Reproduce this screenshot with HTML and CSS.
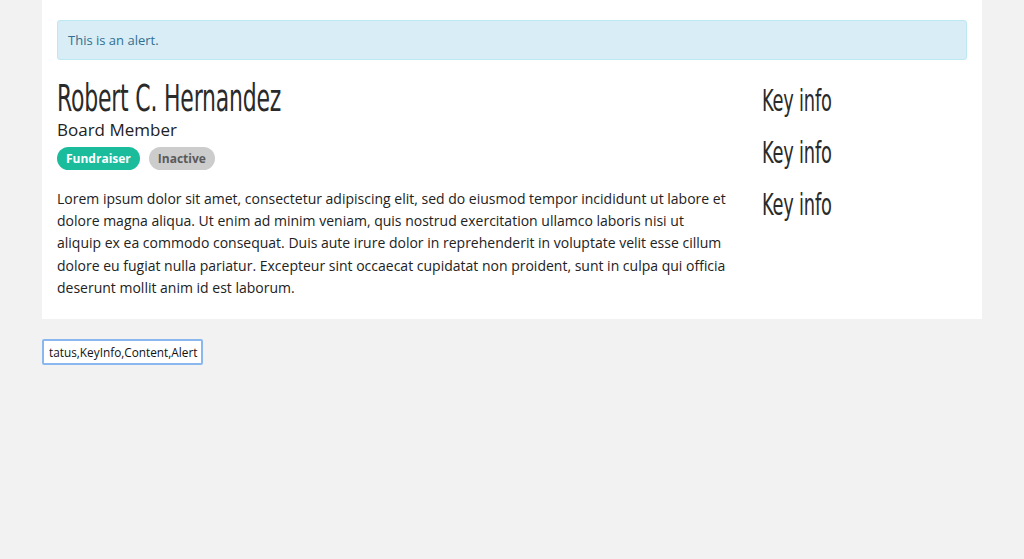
FILE: index.html
```html
<!DOCTYPE html>
<html lang="en">
<head>
<meta charset="utf-8">
<title>Profile</title>
<link rel="stylesheet" href="styles.css">
</head>
<body>
<div class="panel">
  <div class="alert">This is an alert.</div>
  <div class="row">
    <div class="main">
      <h1 class="name"><span class="narrow">Robert C. Hernandez</span></h1>
      <div class="role">Board Member</div>
      <div class="badges">
        <span class="badge badge-green">Fundraiser</span>
        <span class="badge badge-grey">Inactive</span>
      </div>
      <p class="content">Lorem ipsum dolor sit amet, consectetur adipiscing elit, sed do eiusmod tempor incididunt ut labore et dolore magna aliqua. Ut enim ad minim veniam, quis nostrud exercitation ullamco laboris nisi ut aliquip ex ea commodo consequat. Duis aute irure dolor in reprehenderit in voluptate velit esse cillum dolore eu fugiat nulla pariatur. Excepteur sint occaecat cupidatat non proident, sunt in culpa qui officia deserunt mollit anim id est laborum.</p>
    </div>
    <div class="side">
      <div class="key"><span class="narrow">Key info</span></div>
      <div class="key"><span class="narrow">Key info</span></div>
      <div class="key"><span class="narrow">Key info</span></div>
    </div>
  </div>
</div>
<div class="controls">
  <input class="field" type="text" value="tatus,KeyInfo,Content,Alert">
</div>
</body>
</html>
```
FILE: styles.css
```css
html, body {
  margin: 0;
  padding: 0;
  background: #f2f2f2;
  font-family: "Open Sans", "DejaVu Sans", sans-serif;
  color: #222;
}

.panel {
  width: 910px;
  margin: 0 auto;
  background: #fff;
  padding: 20px 15px 20px 15px;
}

.alert {
  background: #d9edf7;
  border: 1px solid #bce8f1;
  border-radius: 3px;
  color: #31708f;
  font-size: 13px;
  line-height: 18px;
  padding: 10px 10px;
}

.row {
  display: flex;
  margin-top: 20px;
}

.main {
  width: 671px;
  flex: none;
}

.side {
  margin-left: 34px;
  flex: 1;
  margin-top: -5px;
}

.narrow {
  display: inline-block;
  transform: scaleX(0.66);
  transform-origin: left center;
  white-space: nowrap;
}

.name {
  margin: 0;
  font-family: "DejaVu Sans Condensed", "Liberation Sans", sans-serif;
  font-stretch: condensed;
  font-weight: normal;
  font-size: 37px;
  line-height: 38px;
  color: #2a2a2a;
  letter-spacing: -0.3px;
}

.role {
  font-size: 17px;
  line-height: 24px;
  color: #222;
}

.badges {
  display: flex;
  gap: 9px;
  margin-top: 5px;
}

.badge {
  display: inline-block;
  font-size: 12px;
  font-weight: bold;
  line-height: 23px;
  padding: 0 9px;
  border-radius: 12px;
}

.badge-green {
  background: #1abc9c;
  color: #fff;
}

.badge-grey {
  background: #cccccc;
  color: #5a5a5a;
}

.content {
  margin: 18px 0 0 0;
  font-size: 14px;
  line-height: 22.2px;
  color: #222;
}

.key {
  font-family: "DejaVu Sans Condensed", "Liberation Sans", sans-serif;
  font-stretch: condensed;
  font-size: 30px;
  line-height: 52px;
  color: #2a2a2a;
  letter-spacing: -0.3px;
}

.controls {
  width: 940px;
  margin: 20px auto 0 auto;
}

.field {
  box-sizing: border-box;
  width: 161px;
  height: 26px;
  margin: 0;
  padding: 0 2px 0 5px;
  border: 2px solid #8ab8ee;
  border-radius: 2px;
  outline: none;
  background: #fff;
  font-family: "Open Sans", sans-serif;
  font-size: 11.8px;
  color: #111;
}
```
